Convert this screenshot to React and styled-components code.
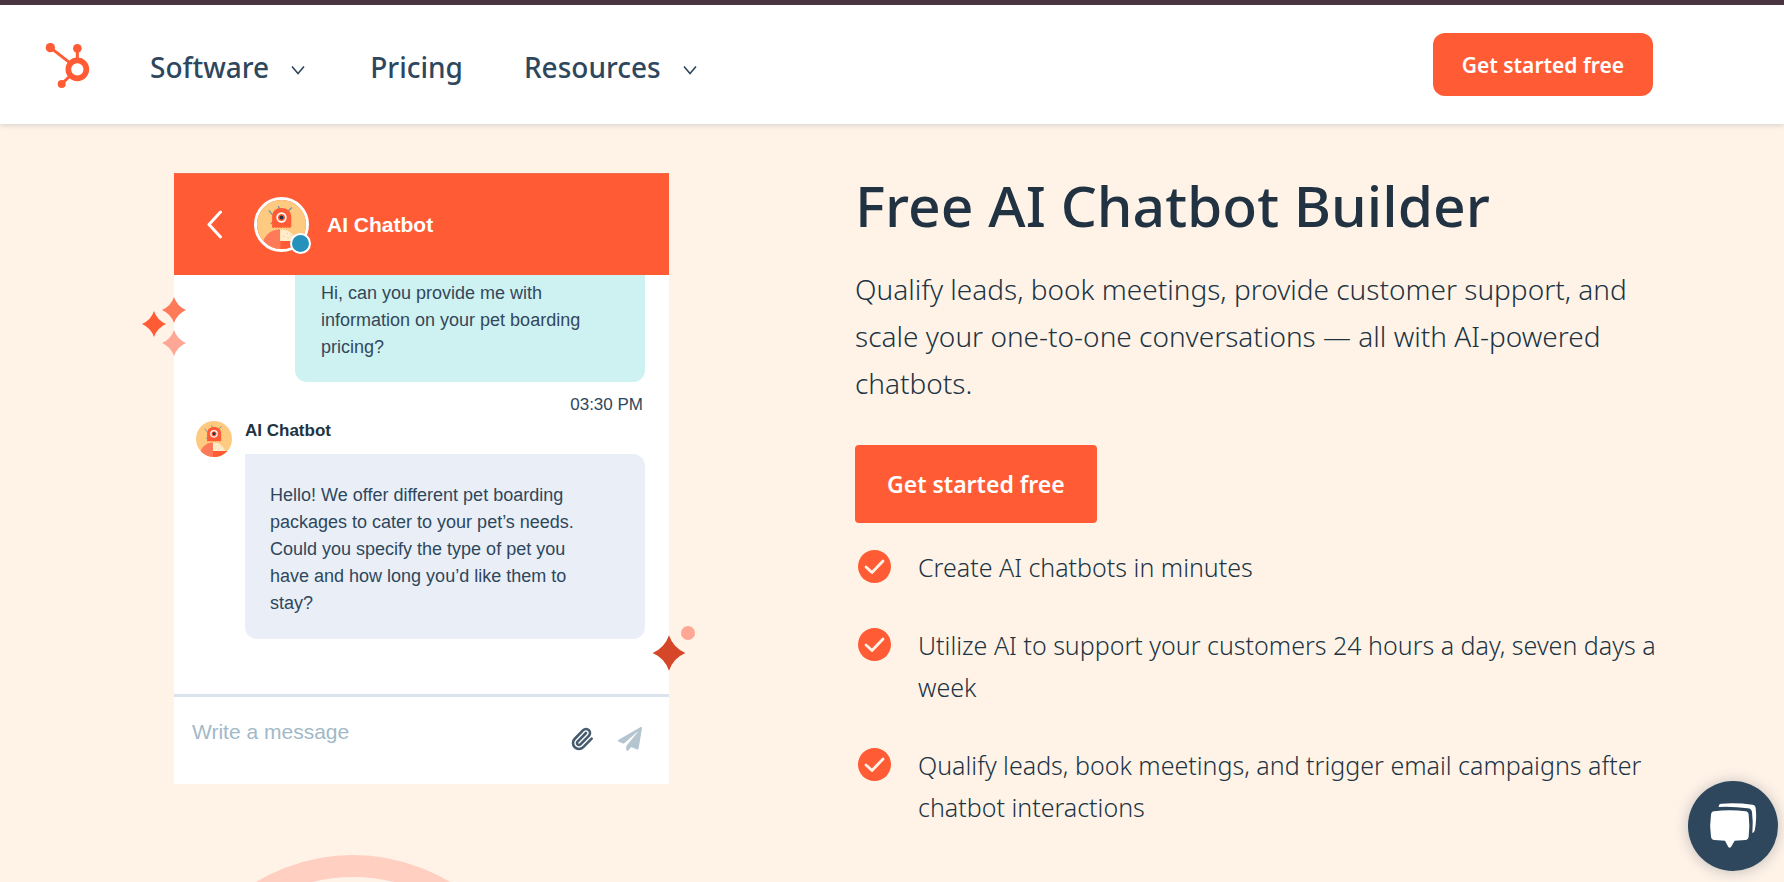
import React from 'react';
import styled, { createGlobalStyle } from 'styled-components';
import { Paperclip } from 'lucide-react';
import { FaPaperPlane } from 'react-icons/fa';

const colors = {
  orange: '#ff5c35',
  coral: '#ff7a59',
  blush: '#ffa795',
  brick: '#d54728',
  peach: '#ffcfc2',
  cream: '#fff3e8',
  navy: '#213343',
  slate: '#2e475d',
  plum: '#4b3442',
};

const brandFont = '"Noto Sans", "Open Sans", sans-serif';
const chatFont = '"Liberation Sans", Arial, sans-serif';

const GlobalStyle = createGlobalStyle`
  * {
    box-sizing: border-box;
  }

  body {
    margin: 0;
    background: ${colors.cream};
    color: ${colors.navy};
    font-family: ${brandFont};
  }
`;

const Page = styled.div`
  display: flex;
  flex-direction: column;
  min-height: 100vh;
`;

const Header = styled.header`
  display: flex;
  align-items: center;
  padding: 28px 131px 28px 45px;
  border-top: 5px solid ${colors.plum};
  background: #fff;
  box-shadow: 0 1px 6px rgba(45, 62, 80, 0.2);
`;

const HomeLink = styled.a`
  display: flex;
  margin-right: 57px;
`;

const Nav = styled.nav`
  display: flex;
  flex: 1;
  align-items: center;
  gap: 61px;
  padding-top: 5px;
`;

const navItem = `
  display: flex;
  align-items: center;
  padding: 0;
  border: 0;
  background: none;
  color: ${colors.slate};
  font-family: ${brandFont};
  font-size: 28px;
  font-weight: 500;
  line-height: 40px;
  text-decoration: none;
  cursor: pointer;
`;

const NavLink = styled.a`
  ${navItem}
`;

const NavButton = styled.button`
  ${navItem}
  gap: 22px;
  padding-right: 4px;

  svg {
    margin-top: 6px;
  }
`;

const CtaLink = styled.a`
  display: inline-block;
  padding: ${({ $large }) => ($large ? '23px 32px' : '16px 29px 15px')};
  border-radius: ${({ $large }) => ($large ? '4px' : '12px')};
  background: ${colors.orange};
  color: #fff;
  font-size: ${({ $large }) => ($large ? '23px' : '21px')};
  font-weight: 600;
  line-height: 32px;
  text-decoration: none;
`;

const Hero = styled.main`
  display: grid;
  grid-template-columns: 681fr 819fr;
  padding: 48px 110px 27px 174px;
`;

const ChatPreview = styled.section`
  position: relative;
  align-self: start;
  margin-top: 1px;
  width: 100%;
  max-width: 495px;
  background: #fff;
  font-family: ${chatFont};
`;

const ChatHeader = styled.header`
  display: flex;
  align-items: center;
  height: 102px;
  padding-left: 33px;
  border-top: 1px solid #ea6c4b;
  background: ${colors.orange};
`;

const BackButton = styled.button`
  display: flex;
  margin-right: 32px;
  padding: 0;
  border: 0;
  background: none;
  cursor: pointer;
`;

const HeaderAvatar = styled.div`
  position: relative;
  display: flex;
  margin-right: 18px;
  border: 3px solid #fff;
  border-radius: 50%;
`;

const StatusDot = styled.span`
  position: absolute;
  right: -5px;
  bottom: -5px;
  width: 21px;
  height: 21px;
  border: 2px solid #fff;
  border-radius: 50%;
  background: #2692bb;
`;

const ChatTitle = styled.h2`
  margin: 0;
  color: #fff;
  font-size: 21px;
  font-weight: 700;
  line-height: 24px;
`;

const Messages = styled.div`
  display: flex;
  flex-direction: column;
  padding: 0 24px 55px 22px;
`;

const Bubble = styled.p`
  margin: 0;
  color: ${({ $visitor }) => ($visitor ? '#33475b' : colors.slate)};
  background: ${({ $visitor }) => ($visitor ? '#cef2f1' : '#eaeff7')};
  border-radius: ${({ $visitor }) => ($visitor ? '0 0 12px 12px' : '0 12px 12px 12px')};
  padding: ${({ $visitor }) => ($visitor ? '5px 26px 21px' : '28px 60px 22px 25px')};
  margin-left: ${({ $visitor }) => ($visitor ? '99px' : '0')};
  font-size: 18px;
  line-height: 27px;
`;

const Time = styled.time`
  align-self: flex-end;
  margin: 13px 2px 6px 0;
  color: ${colors.slate};
  font-size: 17px;
  line-height: 20px;
`;

const BotMessage = styled.div`
  display: flex;
  align-items: flex-start;
  gap: 13px;
`;

const BotMessageBody = styled.div`
  flex: 1;
`;

const BotName = styled.h3`
  margin: 0 0 13px;
  font-size: 17px;
  font-weight: 700;
  line-height: 20px;
`;

const Composer = styled.form`
  display: flex;
  align-items: center;
  height: 90px;
  padding: 0 27px 4px 18px;
  border-top: 3px solid #dbe3ed;
`;

const MessageInput = styled.input`
  flex: 1;
  min-width: 0;
  margin-bottom: 14px;
  padding: 0;
  border: 0;
  outline: 0;
  background: none;
  color: ${colors.slate};
  font-family: ${chatFont};
  font-size: 21px;
  line-height: 24px;

  &::placeholder {
    color: #a2b9c8;
    opacity: 1;
  }
`;

const IconButton = styled.button`
  display: flex;
  margin-left: 24px;
  padding: 0;
  border: 0;
  background: none;
  color: ${({ $muted }) => ($muted ? '#b4c5d0' : '#475b6e')};
  cursor: pointer;
`;

const SparkleCluster = styled.svg`
  position: absolute;
  top: 123px;
  left: -34px;
`;

const SparkleAccent = styled.svg`
  position: absolute;
  right: -28px;
  bottom: 112px;
`;

const Title = styled.h1`
  margin: 1px 0 29px;
  font-size: 57px;
  font-weight: 500;
  line-height: 64px;
`;

const Lead = styled.p`
  margin: 0 0 38px;
  font-size: 28px;
  font-weight: 300;
  line-height: 47px;
`;

const Benefits = styled.ul`
  display: flex;
  flex-direction: column;
  gap: 36px;
  margin: 23px 0 0;
  padding: 0 0 0 3px;
  list-style: none;
`;

const Benefit = styled.li`
  display: flex;
  gap: 27px;
  font-size: 25px;
  font-weight: 300;
  line-height: 42px;

  svg {
    flex: none;
    margin-top: 4px;
  }
`;

const NextSection = styled.section`
  position: relative;
  flex: 1 1 27px;
  overflow: hidden;
`;

const Ring = styled.div`
  position: absolute;
  top: 0;
  left: 165px;
  width: 376px;
  height: 376px;
  border: 22px solid ${colors.peach};
  border-radius: 50%;
`;

const ChatLauncher = styled.button`
  position: fixed;
  right: 6px;
  bottom: 11px;
  width: 90px;
  height: 90px;
  padding: 0;
  border: 0;
  border-radius: 50%;
  background: ${colors.slate};
  box-shadow: 0 1px 14px rgba(45, 62, 80, 0.3);
  cursor: pointer;
`;

const Logo = () => (
  <svg width="48" height="48" viewBox="27 24 144 144" aria-hidden="true">
    <g stroke={colors.orange} strokeWidth="9" fill="none">
      <path d="M43 44 104 91M124 46v36M77 153l28-27" />
      <circle cx="124" cy="109" r="27" strokeWidth="17" />
    </g>
    <g fill={colors.orange}>
      <circle cx="43" cy="44" r="14" />
      <circle cx="124" cy="46" r="13" />
      <circle cx="77" cy="153" r="12" />
    </g>
  </svg>
);

const ChevronDown = () => (
  <svg width="14" height="10" viewBox="0 0 14 10" fill="none" stroke={colors.slate} strokeWidth="1.6" aria-hidden="true">
    <path d="M1 1.5 7 8.5l6-7" />
  </svg>
);

const BotAvatar = ({ size, clip }) => (
  <svg width={size} height={size} viewBox="8 8 146 146" aria-hidden="true">
    <clipPath id={clip}>
      <circle cx="81" cy="81" r="73" />
    </clipPath>
    <g clipPath={`url(#${clip})`}>
      <rect width="162" height="162" fill="#fdca7f" />
      <path d="M43 39l12 14M112 30l-14 13M71 26l5 10M49 80l8-9" stroke="#7a94a5" strokeWidth="4" />
      <path d="M53 89V60c0-18 10-28 28-28s29 10 29 28v29z" fill={colors.orange} />
      <path d="M54 90h56" stroke={colors.orange} strokeWidth="3" strokeDasharray="4 4" />
      <circle cx="81" cy="60" r="13" fill={colors.orange} stroke="#fff" strokeWidth="5" />
      <circle cx="81" cy="60" r="6" fill={colors.navy} />
      <path d="M77 95v60H22c0-34 22-60 55-60z" fill={colors.coral} />
      <path d="M77 95c24 0 42 14 50 35H77z" fill="#ffeccb" />
      <path d="M77 130h60v30H77z" fill={colors.orange} />
      <path d="M87 117h3M96 108h3M99 121h3M108 113h3" stroke="#f0b48c" strokeWidth="3" />
    </g>
  </svg>
);

const CheckIcon = () => (
  <svg width="33" height="33" viewBox="0 0 33 33" fill="none" aria-hidden="true">
    <circle cx="16.5" cy="16.5" r="16.5" fill={colors.orange} />
    <path d="m8 17 6 5.500L25 11" stroke={colors.cream} strokeWidth="2.8" strokeLinecap="round" strokeLinejoin="round" />
  </svg>
);

const star = 'M0-13Q3-4 12 0 3 4 0 13-3 4-12 0-3-4 0-13z';

const benefits = [
  'Create AI chatbots in minutes',
  'Utilize AI to support your customers 24 hours a day, seven days a week',
  'Qualify leads, book meetings, and trigger email campaigns after chatbot interactions',
];

const SiteHeader = () => (
  <Header>
    <HomeLink href="#" aria-label="Home">
      <Logo />
    </HomeLink>
    <Nav>
      <NavButton type="button">
        Software
        <ChevronDown />
      </NavButton>
      <NavLink href="#">Pricing</NavLink>
      <NavButton type="button">
        Resources
        <ChevronDown />
      </NavButton>
    </Nav>
    <CtaLink href="#">Get started free</CtaLink>
  </Header>
);

const ChatWindow = () => (
  <ChatPreview aria-label="Chat preview">
    <ChatHeader>
      <BackButton type="button" aria-label="Back">
        <svg width="15" height="29" viewBox="0 0 15 29" fill="none" stroke="#fff" strokeWidth="3" strokeLinecap="round" strokeLinejoin="round">
          <path d="M13.5 2 2 14.5 13.500 27" />
        </svg>
      </BackButton>
      <HeaderAvatar>
        <BotAvatar size={49} clip="header-avatar" />
        <StatusDot />
      </HeaderAvatar>
      <ChatTitle>AI Chatbot</ChatTitle>
    </ChatHeader>
    <Messages>
      <Bubble $visitor>Hi, can you provide me with information on your pet boarding pricing?</Bubble>
      <Time>03:30 PM</Time>
      <BotMessage>
        <BotAvatar size={36} clip="message-avatar" />
        <BotMessageBody>
          <BotName>AI Chatbot</BotName>
          <Bubble>
            Hello! We offer different pet boarding packages to cater to your pet’s needs. Could you
            specify the type of pet you have and how long you’d like them to stay?
          </Bubble>
        </BotMessageBody>
      </BotMessage>
    </Messages>
    <Composer onSubmit={(e) => e.preventDefault()}>
      <MessageInput type="text" placeholder="Write a message" aria-label="Write a message" />
      <IconButton type="button" aria-label="Attach file">
        <Paperclip size={24} strokeWidth={2.6} />
      </IconButton>
      <IconButton type="submit" aria-label="Send" $muted>
        <FaPaperPlane size={24} />
      </IconButton>
    </Composer>
    <SparkleCluster width="48" height="60" viewBox="0 0 48 60" aria-hidden="true">
      <path d={star} fill={colors.orange} transform="translate(14 28)" />
      <path d={star} fill={colors.coral} transform="translate(34 14)" />
      <path d={star} fill={colors.blush} transform="translate(34 47)" />
    </SparkleCluster>
    <SparkleAccent width="45" height="48" viewBox="0 0 45 48" aria-hidden="true">
      <path d={star} fill={colors.brick} transform="translate(17 29) scale(1.36)" />
      <circle cx="36" cy="9" r="7" fill={colors.blush} />
    </SparkleAccent>
  </ChatPreview>
);

const App = () => (
  <>
    <GlobalStyle />
    <Page>
      <SiteHeader />
      <Hero>
        <ChatWindow />
        <div>
          <Title>Free AI Chatbot Builder</Title>
          <Lead>
            Qualify leads, book meetings, provide customer support, and scale your one-to-one
            conversations — all with AI-powered chatbots.
          </Lead>
          <CtaLink href="#" $large>Get started free</CtaLink>
          <Benefits>
            {benefits.map(text => (
              <Benefit key={text}>
                <CheckIcon />
                <span>{text}</span>
              </Benefit>
            ))}
          </Benefits>
        </div>
      </Hero>
      <NextSection>
        <Ring />
      </NextSection>
    </Page>
    <ChatLauncher type="button" aria-label="Open chat">
      <svg width="90" height="90" viewBox="144 93 270 270" fill="#fff" aria-hidden="true">
        <path d="M222 184Q269 178 317 184q8 1 9 10 4 32 0 66-1 9-10 10l-32 2-11 19q-4 5-8 0l-10-19-32-2q-9-1-10-10-5-34 0-66 1-9 9-10z" />
        <path d="M237 165q2-4 8-4 47-3 92 3 9 1 10 10 4 35-3 68-2 6-7 7 3-34-1-63-2-10-13-11-43-6-87-4z" />
      </svg>
    </ChatLauncher>
  </>
);

export default App;
